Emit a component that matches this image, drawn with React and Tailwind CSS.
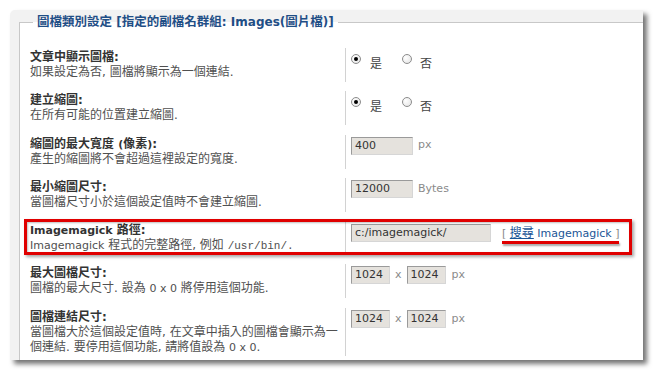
import React from "react";

const L = ({ children }) => <span className="text-[11px]">{children}</span>;

const Radio = ({ checked }) => (
  <span className="mt-[6px] w-[10px] h-[10px] rounded-full border border-[#8c8c8c] bg-[radial-gradient(circle_at_35%_35%,#ffffff,#e2e2e2)] flex items-center justify-center shrink-0">
    {checked && <span className="w-[4px] h-[4px] rounded-full bg-black" />}
  </span>
);

const YesNo = () => (
  <div className="flex items-start">
    <Radio checked />
    <span className="ml-[9px] mt-[9px] leading-[15px] text-[#444]">是</span>
    <span className="ml-[20px]">
      <Radio />
    </span>
    <span className="ml-[8px] mt-[9px] leading-[15px] text-[#444]">否</span>
  </div>
);

const Input = ({ value, w }) => (
  <div
    className={`${w} h-[18px] bg-[#e5e2dd] border border-t-[#9a9a9a] border-l-[#9a9a9a] border-r-[#d6d6d6] border-b-[#d6d6d6] pl-[3px] text-[11px] leading-[16px] text-[#333] overflow-hidden whitespace-nowrap`}
  >
    {value}
  </div>
);

const Row = ({ label, desc, children, tall, relative, overlay }) => (
  <div className={`flex ${tall ? "h-[48px]" : "h-[34px]"} ${relative ? "relative" : ""}`}>
    {overlay}
    <div className="w-[315px] shrink-0 pt-[2px]">
      <div className="font-bold text-[#333] leading-[15px]">{label}</div>
      <div className="text-[#505050] leading-[15px]">{desc}</div>
    </div>
    <div className="border-l border-[#d2d2d2] pl-[5px] flex-1">{children}</div>
  </div>
);

export default function App() {
  return (
    <div className="w-[654px] h-[373px] bg-white pt-[10px] pl-[10px] text-[12px] font-['DejaVu_Sans','Noto_Sans_CJK_TC',sans-serif]">
      <div className="w-[633px] h-[350px] bg-[#f2f2f2] rounded-tl-[5px] shadow-[4px_4px_5px_rgba(0,0,0,0.55)] pl-[9px] pt-[4px] flex flex-col overflow-hidden">
        <fieldset className="flex-1 min-w-0 bg-white border-t border-l border-[#c8c8c8] pl-[10px] pr-[8px] pt-[18px]">
          <legend className="ml-[3px] px-[4px] text-[12.5px] font-bold leading-[16px] text-[#1f4e86]">
            圖檔類別設定 <span className="text-[12px]">[</span>指定的副檔名群組<span className="text-[12px]">: Images(</span>圖片檔<span className="text-[12px]">)]</span>
          </legend>
          <div className="flex flex-col gap-[9.3px]">
            <Row label="文章中顯示圖檔:" desc="如果設定為否, 圖檔將顯示為一個連結.">
              <YesNo />
            </Row>
            <Row label="建立縮圖:" desc="在所有可能的位置建立縮圖.">
              <YesNo />
            </Row>
            <Row
              label={<>縮圖的最大寬度 <L>(</L>像素<L>)</L>:</>}
              desc="產生的縮圖將不會超過這裡設定的寬度."
            >
              <div className="mt-[2px] flex items-center">
                <Input value="400" w="w-[62px]" />
                <span className="ml-[5px] text-[11px] text-[#8a8a8a]">px</span>
              </div>
            </Row>
            <Row label="最小縮圖尺寸:" desc="當圖檔尺寸小於這個設定值時不會建立縮圖.">
              <div className="mt-[2px] flex items-center">
                <Input value="12000" w="w-[62px]" />
                <span className="ml-[5px] text-[11px] text-[#8a8a8a]">Bytes</span>
              </div>
            </Row>
            <Row
              relative
              overlay={
                <div className="absolute -left-[6px] -top-[2px] w-[608px] h-[36px] border-[3px] border-[#e00000] shadow-[2px_2px_3px_rgba(0,0,0,0.35),inset_1px_1px_2px_rgba(0,0,0,0.25)] pointer-events-none" />
              }
              label={<><L>Imagemagick</L> 路徑:</>}
              desc={
                <>
                  <L>Imagemagick</L> 程式的完整路徑, 例如{" "}
                  <span className="font-['Liberation_Mono',monospace] text-[11px]">/usr/bin/.</span>
                </>
              }
            >
              <div className="mt-[3px] flex items-center">
                <Input value="c:/imagemagick/" w="w-[140px]" />
                <span className="relative ml-[11px] leading-[15px] whitespace-nowrap">
                  <span className="text-[11px] text-[#888]">[ </span>
                  <span className="text-[#1a5596] underline">搜尋</span>
                  <span className="text-[11px] text-[#1a5596]"> Imagemagick</span>
                  <span className="text-[11px] text-[#888]"> ]</span>
                  <span className="absolute left-0 right-0 top-[15px] h-[3px] bg-[#e00000] shadow-[1px_2px_2px_rgba(0,0,0,0.35)]" />
                </span>
              </div>
            </Row>
            <Row
              label="最大圖檔尺寸:"
              desc={<>圖檔的最大尺寸. 設為 <L>0 x 0</L> 將停用這個功能.</>}
            >
              <div className="mt-[2px] flex items-center">
                <Input value="1024" w="w-[39px]" />
                <span className="mx-[5px] text-[11px] text-[#8a8a8a]">x</span>
                <Input value="1024" w="w-[39px]" />
                <span className="ml-[6px] text-[11px] text-[#8a8a8a]">px</span>
              </div>
            </Row>
            <Row
              tall
              label="圖檔連結尺寸:"
              desc={
                <>
                  當圖檔大於這個設定值時, 在文章中插入的圖檔會顯示為一
                  <br />
                  個連結. 要停用這個功能, 請將值設為 <L>0 x 0</L>.
                </>
              }
            >
              <div className="mt-[2px] flex items-center">
                <Input value="1024" w="w-[39px]" />
                <span className="mx-[5px] text-[11px] text-[#8a8a8a]">x</span>
                <Input value="1024" w="w-[39px]" />
                <span className="ml-[6px] text-[11px] text-[#8a8a8a]">px</span>
              </div>
            </Row>
          </div>
        </fieldset>
      </div>
    </div>
  );
}
